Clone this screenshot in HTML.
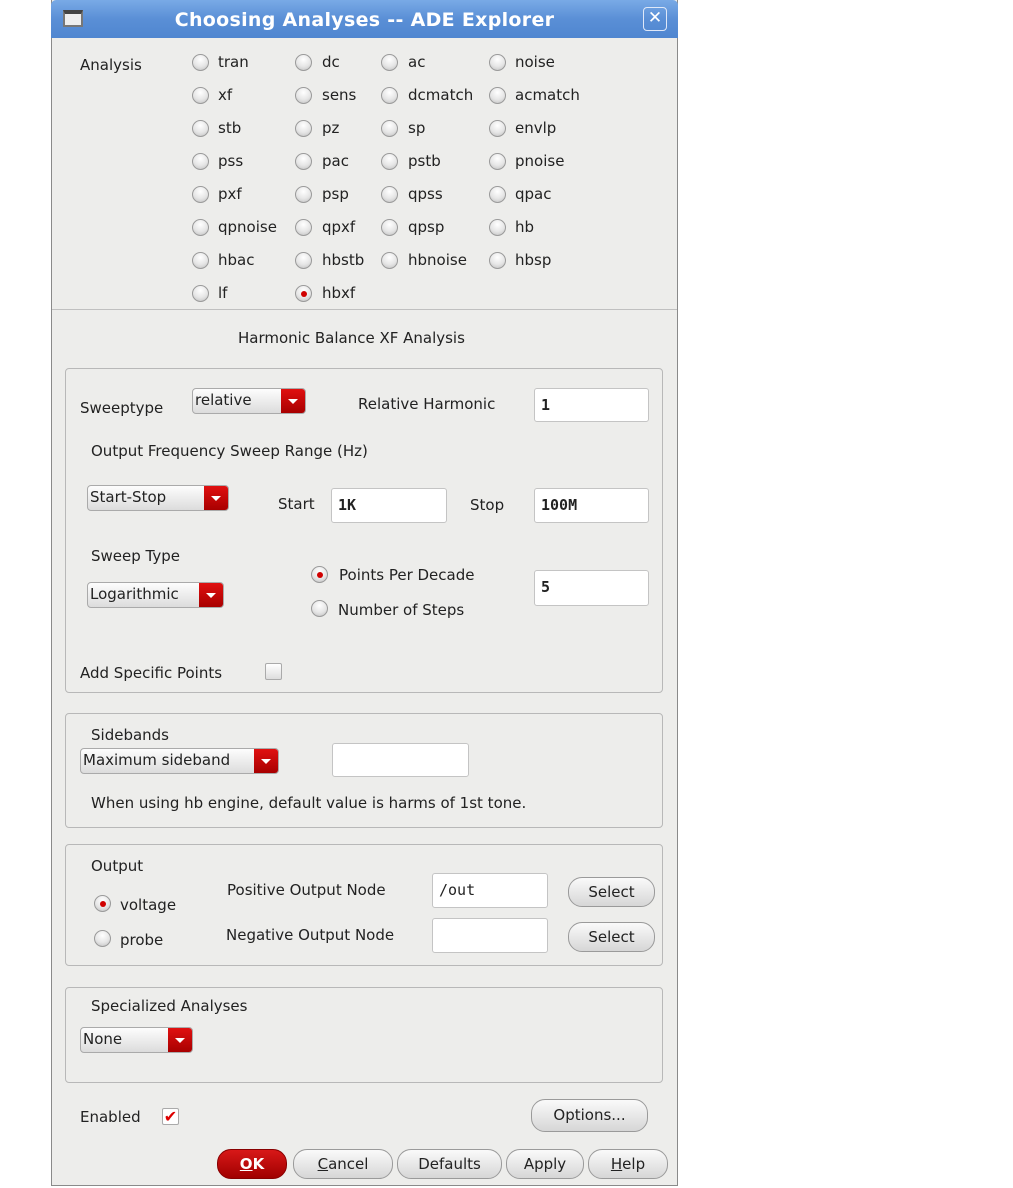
<!DOCTYPE html>
<html><head><meta charset="utf-8"><style>
*{margin:0;padding:0;box-sizing:border-box}
body{width:1013px;height:1188px;background:#fff;position:relative;overflow:hidden;font-family:"DejaVu Sans","Liberation Sans",sans-serif;font-size:15px;color:#222}
.win{position:absolute;left:51px;top:0;width:627px;height:1186px;background:#ededeb;border:1px solid #8a8a8a;border-top:none}
.title{position:absolute;left:51px;top:0;width:627px;height:38px;background:linear-gradient(#79aae6,#5a8fd6 50%,#4f86d0);border-radius:5px 5px 0 0;color:#fff;font-weight:bold;font-size:19px;text-align:center;line-height:40px;letter-spacing:0.3px}
.t{position:absolute;white-space:nowrap;line-height:20px}
.r{position:absolute;width:17px;height:17px;border-radius:50%;border:1px solid #9a9a9a;background:radial-gradient(circle at 50% 30%,#fff,#e6e6e6 55%,#bdbdbd)}
.r.on::after{content:"";position:absolute;left:4.5px;top:4.5px;width:6px;height:6px;border-radius:50%;background:#d00000}
.box{position:absolute;border:1px solid #b8b8b8;border-radius:4px}
.in{position:absolute;background:#fff;border:1px solid #c4c4c4;border-radius:3px;font-family:"DejaVu Sans Mono","Liberation Mono",monospace;font-weight:bold;font-size:15px;padding-left:6px;line-height:32px}
.dd{position:absolute;height:26px;border:1px solid #aaa;border-radius:4px;background:linear-gradient(#fdfdfd,#dcdcdc);line-height:23px;padding-left:2px;overflow:hidden}
.dd b{position:absolute;right:0;top:0;width:24px;height:100%;background:linear-gradient(#e01010,#a80000)}
.dd b::after{content:"";position:absolute;left:7px;top:10px;border-left:5px solid transparent;border-right:5px solid transparent;border-top:5px solid #fff}
.btn{position:absolute;height:30px;border:1px solid #9a9a9a;border-radius:14px;background:linear-gradient(#fafafa,#d6d6d6);text-align:center;line-height:28px}
</style></head><body>
<div class="win"></div>
<div class="title">Choosing Analyses -- ADE Explorer</div>
<div style="position:absolute;left:63px;top:10px;width:20px;height:17px;background:#eee;border:2px solid #777;border-top:4px solid #444"></div>
<div style="position:absolute;left:643px;top:7px;width:24px;height:24px;border:1px solid #dfe8f8;border-radius:4px;color:#fff;font-size:17px;line-height:21px;text-align:center;font-weight:bold">✕</div>

<div class="t" style="left:80px;top:55px">Analysis</div>
<div id="an"></div>

<div style="position:absolute;left:52px;top:309px;width:625px;border-top:1px solid #c0c0c0"></div>
<div class="t" style="left:238px;top:328px">Harmonic Balance XF Analysis</div>

<div class="box" style="left:65px;top:368px;width:598px;height:325px"></div>
<div class="t" style="left:80px;top:398px">Sweeptype</div>
<div class="dd" style="left:192px;top:388px;width:114px">relative<b></b></div>
<div class="t" style="left:358px;top:394px">Relative Harmonic</div>
<div class="in" style="left:534px;top:388px;width:115px;height:34px">1</div>
<div class="t" style="left:91px;top:441px">Output Frequency Sweep Range (Hz)</div>
<div class="dd" style="left:87px;top:485px;width:142px">Start-Stop<b></b></div>
<div class="t" style="left:278px;top:494px">Start</div>
<div class="in" style="left:331px;top:488px;width:116px;height:35px">1K</div>
<div class="t" style="left:470px;top:495px">Stop</div>
<div class="in" style="left:534px;top:488px;width:115px;height:35px">100M</div>
<div class="t" style="left:91px;top:546px">Sweep Type</div>
<div class="dd" style="left:87px;top:582px;width:137px">Logarithmic<b></b></div>
<div class="r on" style="left:311px;top:566px"></div>
<div class="t" style="left:339px;top:565px">Points Per Decade</div>
<div class="r" style="left:311px;top:600px"></div>
<div class="t" style="left:338px;top:600px">Number of Steps</div>
<div class="in" style="left:534px;top:570px;width:115px;height:36px">5</div>
<div class="t" style="left:80px;top:663px">Add Specific Points</div>
<div style="position:absolute;left:265px;top:663px;width:17px;height:17px;border:1px solid #aaa;border-radius:2px;background:linear-gradient(#fff,#ddd)"></div>

<div class="box" style="left:65px;top:713px;width:598px;height:115px"></div>
<div class="t" style="left:91px;top:725px">Sidebands</div>
<div class="dd" style="left:80px;top:748px;width:199px">Maximum sideband<b></b></div>
<div class="in" style="left:332px;top:743px;width:137px;height:34px"></div>
<div class="t" style="left:91px;top:793px">When using hb engine, default value is harms of 1st tone.</div>

<div class="box" style="left:65px;top:844px;width:598px;height:122px"></div>
<div class="t" style="left:91px;top:856px">Output</div>
<div class="r on" style="left:94px;top:895px"></div>
<div class="t" style="left:120px;top:895px">voltage</div>
<div class="r" style="left:94px;top:930px"></div>
<div class="t" style="left:120px;top:930px">probe</div>
<div class="t" style="left:227px;top:880px">Positive Output Node</div>
<div class="t" style="left:226px;top:925px">Negative Output Node</div>
<div class="in" style="left:432px;top:873px;width:116px;height:35px;font-weight:normal">/out</div>
<div class="in" style="left:432px;top:918px;width:116px;height:35px"></div>
<div class="btn" style="left:568px;top:877px;width:87px">Select</div>
<div class="btn" style="left:568px;top:922px;width:87px">Select</div>

<div class="box" style="left:65px;top:987px;width:598px;height:96px"></div>
<div class="t" style="left:91px;top:996px">Specialized Analyses</div>
<div class="dd" style="left:80px;top:1027px;width:113px">None<b></b></div>

<div class="t" style="left:80px;top:1107px">Enabled</div>
<div style="position:absolute;left:162px;top:1108px;width:17px;height:17px;border:1px solid #aaa;border-radius:2px;background:#fff;color:#d00;font-size:16px;line-height:15px;text-align:center;font-weight:bold">✔</div>
<div class="btn" style="left:531px;top:1099px;width:117px;height:33px;line-height:31px">Options...</div>

<div class="btn" style="left:217px;top:1149px;width:70px;background:linear-gradient(#d81818,#a00000);border-color:#800;color:#fff;font-weight:bold"><u>O</u>K</div>
<div class="btn" style="left:293px;top:1149px;width:100px"><u>C</u>ancel</div>
<div class="btn" style="left:397px;top:1149px;width:105px">Defaults</div>
<div class="btn" style="left:506px;top:1149px;width:78px">Apply</div>
<div class="btn" style="left:588px;top:1149px;width:80px"><u>H</u>elp</div>

<script>
var rows=[["tran","dc","ac","noise"],["xf","sens","dcmatch","acmatch"],["stb","pz","sp","envlp"],["pss","pac","pstb","pnoise"],["pxf","psp","qpss","qpac"],["qpnoise","qpxf","qpsp","hb"],["hbac","hbstb","hbnoise","hbsp"],["lf","hbxf"]];
var cx=[192,295,381,489],tx=[218,322,408,515],h="";
rows.forEach(function(r,i){var y=62+33*i;r.forEach(function(n,j){
h+='<div class="r'+(n=="hbxf"?" on":"")+'" style="left:'+cx[j]+'px;top:'+(y-8)+'px"></div><div class="t" style="left:'+tx[j]+'px;top:'+(y-10)+'px">'+n+'</div>';});});
document.getElementById("an").innerHTML=h;
</script>
</body></html>
